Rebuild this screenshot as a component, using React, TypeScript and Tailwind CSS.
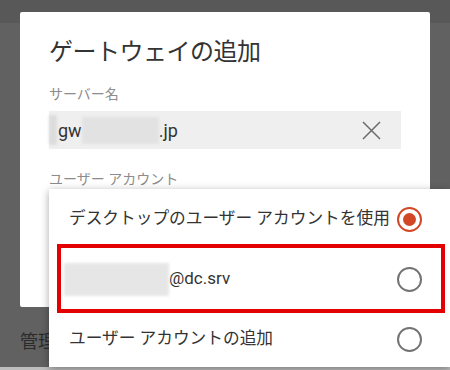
const jp = "font-['Roboto','Noto_Sans_CJK_JP',sans-serif]";

function Radio({ checked }: { checked?: boolean }) {
  return checked ? (
    <span className="w-[25px] h-[25px] rounded-full border-[2.5px] border-[#d24726] flex items-center justify-center">
      <span className="w-[13px] h-[13px] rounded-full bg-[#d24726]" />
    </span>
  ) : (
    <span className="w-[25px] h-[25px] rounded-full border-2 border-[#737373]" />
  );
}

export default function App() {
  return (
    <div className={`relative w-[450px] h-[370px] overflow-hidden bg-[#616161] ${jp}`}>
      {/* page behind the overlay */}
      <div className="h-[23px] bg-[#585858]" />
      <div className="pt-[306px] pl-[20px] text-[18px] leading-[26px] text-[#2b2b2b]">管理</div>
      <div className="absolute bottom-0 left-0 right-0 h-[3px] bg-[#bdbdbd]" />

      {/* dialog */}
      <div className="absolute left-[20px] top-[12px] w-[410px] h-[295px] bg-white rounded-[2px] px-[29px] pt-[24px]">
        <h2 className="text-[24px] leading-[32px] text-[#333] tracking-[-0.5px]">ゲートウェイの追加</h2>
        <div className="mt-[16px] text-[14px] leading-[20px] text-[#8c8c8c]">サーバー名</div>
        <div className="mt-[7px] h-[38px] bg-[#efefef] flex items-center pr-[20px]">
          <span className="w-[8px] h-[30px] bg-[#dcdcdc] blur-[1.5px]" />
          <span className="ml-[1px] text-[18px] text-[#333]">gw</span>
          <span className="w-[77px] h-[27px] bg-[#e2e2e2] blur-[1.5px]" />
          <span className="text-[18px] text-[#333]">.jp</span>
          <svg className="ml-auto" width="19" height="19" viewBox="0 0 19 19" fill="none" stroke="#6a6a6a" strokeWidth="1.5">
            <path d="M1 1L18 18M18 1L1 18" />
          </svg>
        </div>
        <div className="mt-[20px] text-[14px] leading-[20px] text-[#8c8c8c]">ユーザー アカウント</div>
      </div>

      {/* dropdown */}
      <div className="absolute left-[49px] top-[189px] w-[401px] h-[178px] bg-white shadow-[0_2px_8px_rgba(0,0,0,0.35)]">
        <div className="h-[60px] flex items-center justify-between pl-[20px] pr-[28px]">
          <span className="text-[16.7px] text-[#333]">デスクトップのユーザー アカウントを使用</span>
          <Radio checked />
        </div>
        <div className="h-[60px] flex items-center justify-between pl-[15px] pr-[28px]">
          <span className="flex items-center">
            <span className="w-[105px] h-[33px] bg-[#e6e6e6] blur-[1.5px]" />
            <span className="text-[17px] text-[#333]">@dc.srv</span>
          </span>
          <Radio />
        </div>
        <div className="h-[60px] flex items-center justify-between pl-[20px] pr-[28px]">
          <span className="text-[16.7px] text-[#333]">ユーザー アカウントの追加</span>
          <Radio />
        </div>
        <div className="absolute left-[8px] top-[55px] w-[388px] h-[69px] border-4 border-[#e30000]" />
      </div>
    </div>
  );
}
